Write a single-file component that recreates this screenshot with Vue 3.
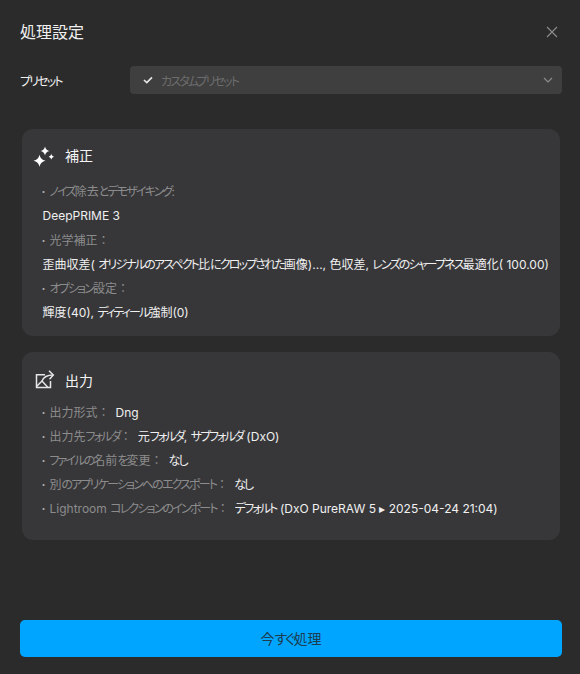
<script setup>
const split = (text) =>
  text.split(/([\u3040-\u30ff]+)/).filter(Boolean).map((t) => ({ t, kana: /^[\u3040-\u30ff]/.test(t) }))
const corrections = [
  { label: 'ノイズ除去とデモザイキング:', value: 'DeepPRIME 3' },
  { label: '光学補正：', value: '歪曲収差( オリジナルのアスペクト比にクロップされた画像)..., 色収差, レンズのシャープネス最適化( 100.00)' },
  { label: 'オプション設定：', value: '輝度(40), ディティール強制(0)' }
]
const outputs = [
  { label: '出力形式：', value: 'Dng' },
  { label: '出力先フォルダ：', value: '元フォルダ, サブフォルダ (DxO)' },
  { label: 'ファイルの名前を変更：', value: 'なし' },
  { label: '別のアプリケーションへのエクスポート：', value: 'なし' },
  { label: 'Lightroom コレクションのインポート：', value: 'デフォルト (DxO PureRAW 5 ▸ 2025-04-24 21:04)' }
]
</script>

<template>
  <div class="dialog">
    <header class="head">
      <h1 class="title">処理設定</h1>
      <svg class="close" width="12" height="12" viewBox="0 0 12 12"><path d="M1 1l10 10M11 1L1 11" stroke="#8a8a8a" stroke-width="1.2" fill="none"/></svg>
    </header>

    <div class="preset">
      <span class="preset-label"><span class="kana">プリセット</span></span>
      <div class="select">
        <svg class="check" width="10" height="8" viewBox="0 0 10 8"><path d="M1 4l2.8 2.600L9 1.400" stroke="#e4e4e4" stroke-width="1.700" fill="none"/></svg>
        <span class="select-text"><span class="kana">カスタムプリセット</span></span>
        <svg class="chev" width="10" height="6" viewBox="0 0 10 6"><path d="M1 1l4 4 4-4" stroke="#8c8c8c" stroke-width="1.200" fill="none"/></svg>
      </div>
    </div>

    <section class="card card-a">
      <div class="card-head">
        <svg class="icon" width="20" height="20" viewBox="0 0 20 20" fill="#fff">
          <path d="M5.500 9.700Q6.500 14.700 11.500 15.700 6.500 16.700 5.500 21.700 4.500 16.700-.5 15.700 4.500 14.700 5.500 9.700z"/>
          <path d="M11 1.500Q11.800 5.200 15.500 6 11.800 6.800 11 10.500 10.200 6.800 6.500 6 10.200 5.200 11 1.500z"/>
          <path d="M17.300 9Q17.800 11.200 20 11.700 17.800 12.200 17.300 14.400 16.800 12.200 14.600 11.700 16.800 11.200 17.300 9z"/>
        </svg>
        <h2 class="card-title">補正</h2>
      </div>
      <div class="stack">
        <template v-for="item in corrections" :key="item.label">
          <div class="label"><span class="dot">·</span><span v-for="(s, i) in split(item.label)" :key="i" :class="{ kana: s.kana }">{{ s.t }}</span></div>
          <div class="value"><span v-for="(s, i) in split(item.value)" :key="i" :class="{ kana: s.kana }">{{ s.t }}</span></div>
        </template>
      </div>
    </section>

    <section class="card card-b">
      <div class="card-head">
        <svg class="icon" width="20" height="20" viewBox="0 0 20 20" fill="none" stroke="#e6e6e6" stroke-width="1.500">
          <path d="M11 4.700H2.500v12.800h14v-6.500"/>
          <path d="M2.500 16.500l5.500-5.500 6 6.500"/>
          <path d="M8 11c1.500-3.800 5-6 11-6"/>
          <path d="M15 .8l4.300 4.200-3.800 4.200"/>
        </svg>
        <h2 class="card-title">出力</h2>
      </div>
      <div class="stack">
        <div v-for="item in outputs" :key="item.label" class="row">
          <span class="label"><span class="dot">·</span><span v-for="(s, i) in split(item.label)" :key="i" :class="{ kana: s.kana }">{{ s.t }}</span></span>
          <span class="value"><span v-for="(s, i) in split(item.value)" :key="i" :class="{ kana: s.kana }">{{ s.t }}</span></span>
        </div>
      </div>
    </section>

    <button class="go">今<span class="kana">すぐ</span>処理</button>
  </div>
</template>

<style>
html, body { margin: 0; background: #2b2b2b; }
</style>

<style scoped>
.dialog {
  width: 580px;
  height: 674px;
  box-sizing: border-box;
  padding: 21px 18px 17px 20px;
  background: #2b2b2b;
  display: flex;
  flex-direction: column;
  font-family: Inter, "Noto Sans CJK JP", sans-serif;
  font-size: 12px;
  color: #f2f2f2;
}
.kana { font-feature-settings: "palt"; letter-spacing: -0.155em; }
.head { display: flex; align-items: center; justify-content: space-between; height: 22px; padding-right: 4px; }
.title { margin: 0; font-size: 16px; font-weight: 400; line-height: 22px; color: #f0f0f0; }
.close { display: block; }
.preset { display: flex; align-items: center; margin-top: 23px; }
.preset-label { width: 110px; color: #f2f2f2; }
.select {
  flex: 1;
  height: 28px;
  box-sizing: border-box;
  padding: 0 9px 0 13px;
  display: flex;
  align-items: center;
  background: #3f3f3f;
  border-radius: 4px;
}
.check { margin-right: 8px; }
.select-text { flex: 1; color: #6d6d6d; }
.card {
  margin: 0 2px;
  background: #37373a;
  border-radius: 11px;
  box-sizing: border-box;
  padding: 0 14px 0 21px;
}
.card-a { margin-top: 35px; height: 207px; padding-top: 13px; }
.card-b { margin-top: 16px; height: 188px; padding-top: 15px; }
.card-head { display: flex; align-items: center; height: 26px; margin-left: -9px; }
.icon { margin-right: 11px; flex: none; overflow: visible; }
.card-title { margin: 0; font-size: 14px; font-weight: 400; color: #f4f4f4; }
.stack { display: flex; flex-direction: column; }
.card-a .stack { margin-top: 12px; }
.card-b .stack { margin-top: 8px; }
.label, .value { white-space: nowrap; }
.card-a .label, .card-a .value { line-height: 24.3px; }
.card-b .label, .card-b .value { line-height: 24px; }
.label { color: #8c8c8c; }
.value { color: #f0f0f0; margin-left: -0.5px; }
.dot { display: inline-block; width: 8px; color: #aaa; font-weight: 700; margin-left: -1.5px; }
.row { display: flex; gap: 6.5px; }
.go {
  margin-top: auto;
  height: 37px;
  padding-bottom: 3px;
  border: 0;
  border-radius: 5px;
  background: #00a5ff;
  color: #1d3c50;
  font: inherit;
  font-size: 14px;
}
</style>
